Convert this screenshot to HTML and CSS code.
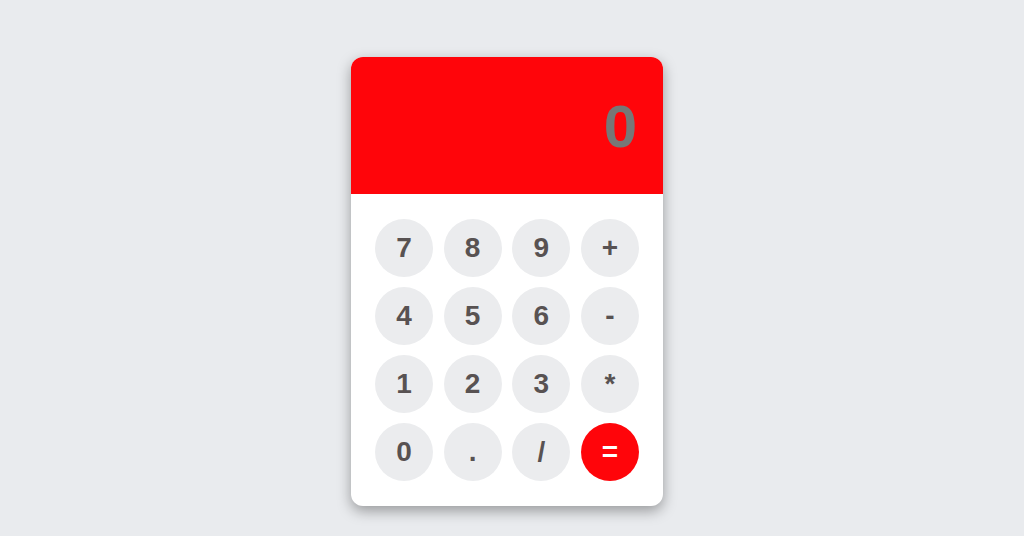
FILE: index.html
```html
<!DOCTYPE html>
<html lang="en">

<head>
    <meta charset="UTF-8">
    <meta name="viewport" content="width=device-width, initial-scale=1.0">
    <title>Calculator</title>
    <link rel="stylesheet" href="styles.css">
</head>

<body>
    <div class="calc">
        <div class="screen" id="screen">0</div>

        <div class="keys">
            <button class="key">7</button>
            <button class="key">8</button>
            <button class="key">9</button>
            <button class="key">+</button>

            <button class="key">4</button>
            <button class="key">5</button>
            <button class="key">6</button>
            <button class="key">-</button>

            <button class="key">1</button>
            <button class="key">2</button>
            <button class="key">3</button>
            <button class="key">*</button>

            <button class="key">0</button>
            <button class="key">.</button>
            <button class="key">/</button>
            <button class="key equal">=</button>
        </div>
    </div>
</body>

</html>
```

FILE: styles.css
```css
html {
    background-color: #e9ebee;
}

body {
    margin: 0;
    padding: 57px 10px 0 0;
    min-height: 100vh;
    box-sizing: border-box;
    display: flex;
    justify-content: center;
    align-items: flex-start;
    font-family: "Liberation Sans", Arial, sans-serif;
}

.calc {
    width: 312px;
    background-color: white;
    border-radius: 12px;
    overflow: hidden;
    box-shadow: 0 5px 14px rgba(0, 0, 0, 0.35);
}

.screen {
    height: 137px;
    background-color: #ff050a;
    color: #777777;
    font-size: 60px;
    font-weight: bold;
    text-align: right;
    padding: 40px 26px 0 0;
    box-sizing: border-box;
    line-height: 1;
}

.keys {
    display: grid;
    grid-template-columns: repeat(4, 58px);
    justify-content: space-between;
    row-gap: 10px;
    padding: 25px 24px 25px 24px;
}

.key {
    width: 58px;
    height: 58px;
    border: none;
    border-radius: 50%;
    background-color: #ebecee;
    color: #585252;
    font-family: "Liberation Sans", Arial, sans-serif;
    font-size: 28px;
    font-weight: bold;
    padding: 0;
}

.equal {
    background-color: #ff050a;
    color: white;
}
```
